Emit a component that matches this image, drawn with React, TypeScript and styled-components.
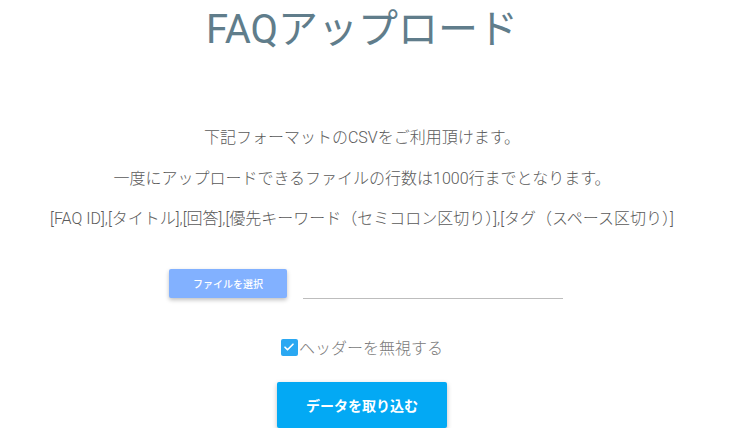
import styled, { createGlobalStyle } from 'styled-components';

const GlobalStyle = createGlobalStyle`
  body {
    margin: 0;
    background: #fff;
    font-family: Roboto, "Noto Sans CJK JP", sans-serif;
  }
`;

const App = () => {
  return (
    <StMain>
      <GlobalStyle />
      <StTitle>FAQアップロード</StTitle>

      <StGuide>
        <p>下記フォーマットのCSVをご利用頂けます。</p>
        <p>一度にアップロードできるファイルの行数は1000行までとなります。</p>
        <p>[FAQ ID],[タイトル],[回答],[優先キーワード（セミコロン区切り）],[タグ（スペース区切り）]</p>
      </StGuide>

      <StFileRow>
        <StSelectButton type="button">ファイルを選択</StSelectButton>
        <StFileField />
      </StFileRow>

      <StCheckLabel>
        <StCheckBox>
          <svg width="12" height="12" viewBox="0 0 24 24">
            <path d="M4 12.5l5 5L20 6.5" fill="none" stroke="#fff" strokeWidth="3.4" strokeLinecap="round" strokeLinejoin="round" />
          </svg>
        </StCheckBox>
        ヘッダーを無視する
      </StCheckLabel>

      <StImportButton type="button">データを取り込む</StImportButton>
    </StMain>
  );
};

export default App;

const StMain = styled.main`
  display: flex;
  flex-direction: column;
  align-items: center;

  padding: 4px 17px 0 0;
`;

const StTitle = styled.h1`
  margin: 0;

  font-size: 40px;
  font-weight: 400;
  line-height: 52px;
  color: #607d8b;
`;

const StGuide = styled.section`
  margin-top: 70px;

  text-align: center;
  font-size: 16px;
  font-weight: 300;
  color: #5a5a5a;

  p {
    margin: 0 0 17px;
    line-height: 24px;
  }

  p:nth-child(2) {
    margin-bottom: 16px;
  }

  p:last-child {
    margin-bottom: 0;
  }
`;

const StFileRow = styled.div`
  display: flex;
  align-items: flex-end;
  gap: 16px;

  margin-top: 38px;
  margin-left: 8px;
`;

const StSelectButton = styled.button`
  width: 118px;
  height: 29px;
  border: none;
  border-radius: 2px;

  background: #82b1ff;
  box-shadow: 0 2px 4px rgba(0, 0, 0, 0.25);

  font-family: inherit;
  font-size: 10px;
  font-weight: 500;
  color: #fff;
`;

const StFileField = styled.div`
  width: 260px;
  height: 1px;
  margin-bottom: -1px;

  background: #bdbdbd;
`;

const StCheckLabel = styled.label`
  display: flex;
  align-items: center;
  gap: 1px;

  margin-top: 37px;

  font-size: 16px;
  font-weight: 300;
  color: #7a7a7a;
`;

const StCheckBox = styled.span`
  display: flex;
  align-items: center;
  justify-content: center;

  width: 17px;
  height: 17px;
  border-radius: 2px;

  background: #2aa8f2;
`;

const StImportButton = styled.button`
  width: 170px;
  height: 46px;
  margin-top: 23px;
  border: none;
  border-radius: 2px;

  background: #03a9f4;
  box-shadow: 0 2px 5px rgba(0, 0, 0, 0.25);

  font-family: inherit;
  font-size: 14px;
  font-weight: 700;
  color: #fff;
`;
